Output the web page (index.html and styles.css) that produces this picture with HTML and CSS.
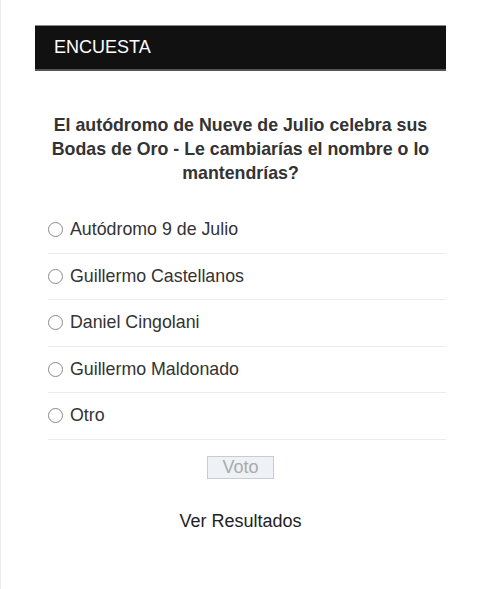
FILE: index.html
```html
<!DOCTYPE html>
<html lang="es">
<head>
<meta charset="utf-8">
<title>Encuesta</title>
<link rel="stylesheet" href="styles.css">
</head>
<body>
<div class="page">
  <div class="poll">
    <div class="poll-header">ENCUESTA</div>
    <h2 class="question">El autódromo de Nueve de Julio celebra sus Bodas de Oro - Le cambiarías el nombre o lo mantendrías?</h2>
    <ul class="options">
      <li class="option"><span class="radio"></span><span>Autódromo 9 de Julio</span></li>
      <li class="option"><span class="radio"></span><span>Guillermo Castellanos</span></li>
      <li class="option"><span class="radio"></span><span>Daniel Cingolani</span></li>
      <li class="option"><span class="radio"></span><span>Guillermo Maldonado</span></li>
      <li class="option"><span class="radio"></span><span>Otro</span></li>
    </ul>
    <div class="actions">
      <button class="vote" type="button">Voto</button>
    </div>
    <div class="results">Ver Resultados</div>
  </div>
</div>
</body>
</html>
```
FILE: styles.css
```css
html, body {
  margin: 0;
  padding: 0;
  height: 100%;
  background: #fff;
}
body {
  font-family: "Liberation Sans", Arial, sans-serif;
  color: #333;
}
.page {
  min-height: 100%;
  border-left: 1px solid #ececec;
  box-sizing: border-box;
  padding-top: 25px;
}
.poll {
  margin-left: 34px;
  width: 411px;
}
.poll-header {
  background: #111;
  color: #fff;
  font-size: 18px;
  height: 43px;
  line-height: 43px;
  padding-left: 19px;
  border-top: 1px solid #888;
  border-bottom: 2px solid #555;
}
.question {
  margin: 42px 0 0;
  padding: 0 10px;
  text-align: center;
  font-size: 17.8px;
  line-height: 24px;
  font-weight: bold;
  color: #333;
}
.options {
  list-style: none;
  margin: 22px 0 0 13px;
  padding: 0;
}
.option {
  display: flex;
  align-items: center;
  gap: 7px;
  height: 46px;
  border-bottom: 1px solid #ececec;
  font-size: 17.8px;
  color: #333;
  box-sizing: border-box;
  padding-bottom: 1px;
}
.option:nth-child(odd) {
  height: 47px;
}
.radio {
  width: 13px;
  height: 13px;
  border: 1px solid #8a8a8a;
  border-radius: 50%;
  background: #fff;
  flex: none;
}
.actions {
  display: flex;
  justify-content: center;
  padding-top: 16px;
}
.vote {
  width: 67px;
  height: 23px;
  padding: 0;
  background: #eef1f5;
  border: 1px solid #c8ccd0;
  color: #aaa;
  font-family: "Liberation Sans", Arial, sans-serif;
  font-size: 18px;
  line-height: 21px;
}
.results {
  text-align: center;
  font-size: 18px;
  color: #222;
  margin-top: 32px;
}
```
